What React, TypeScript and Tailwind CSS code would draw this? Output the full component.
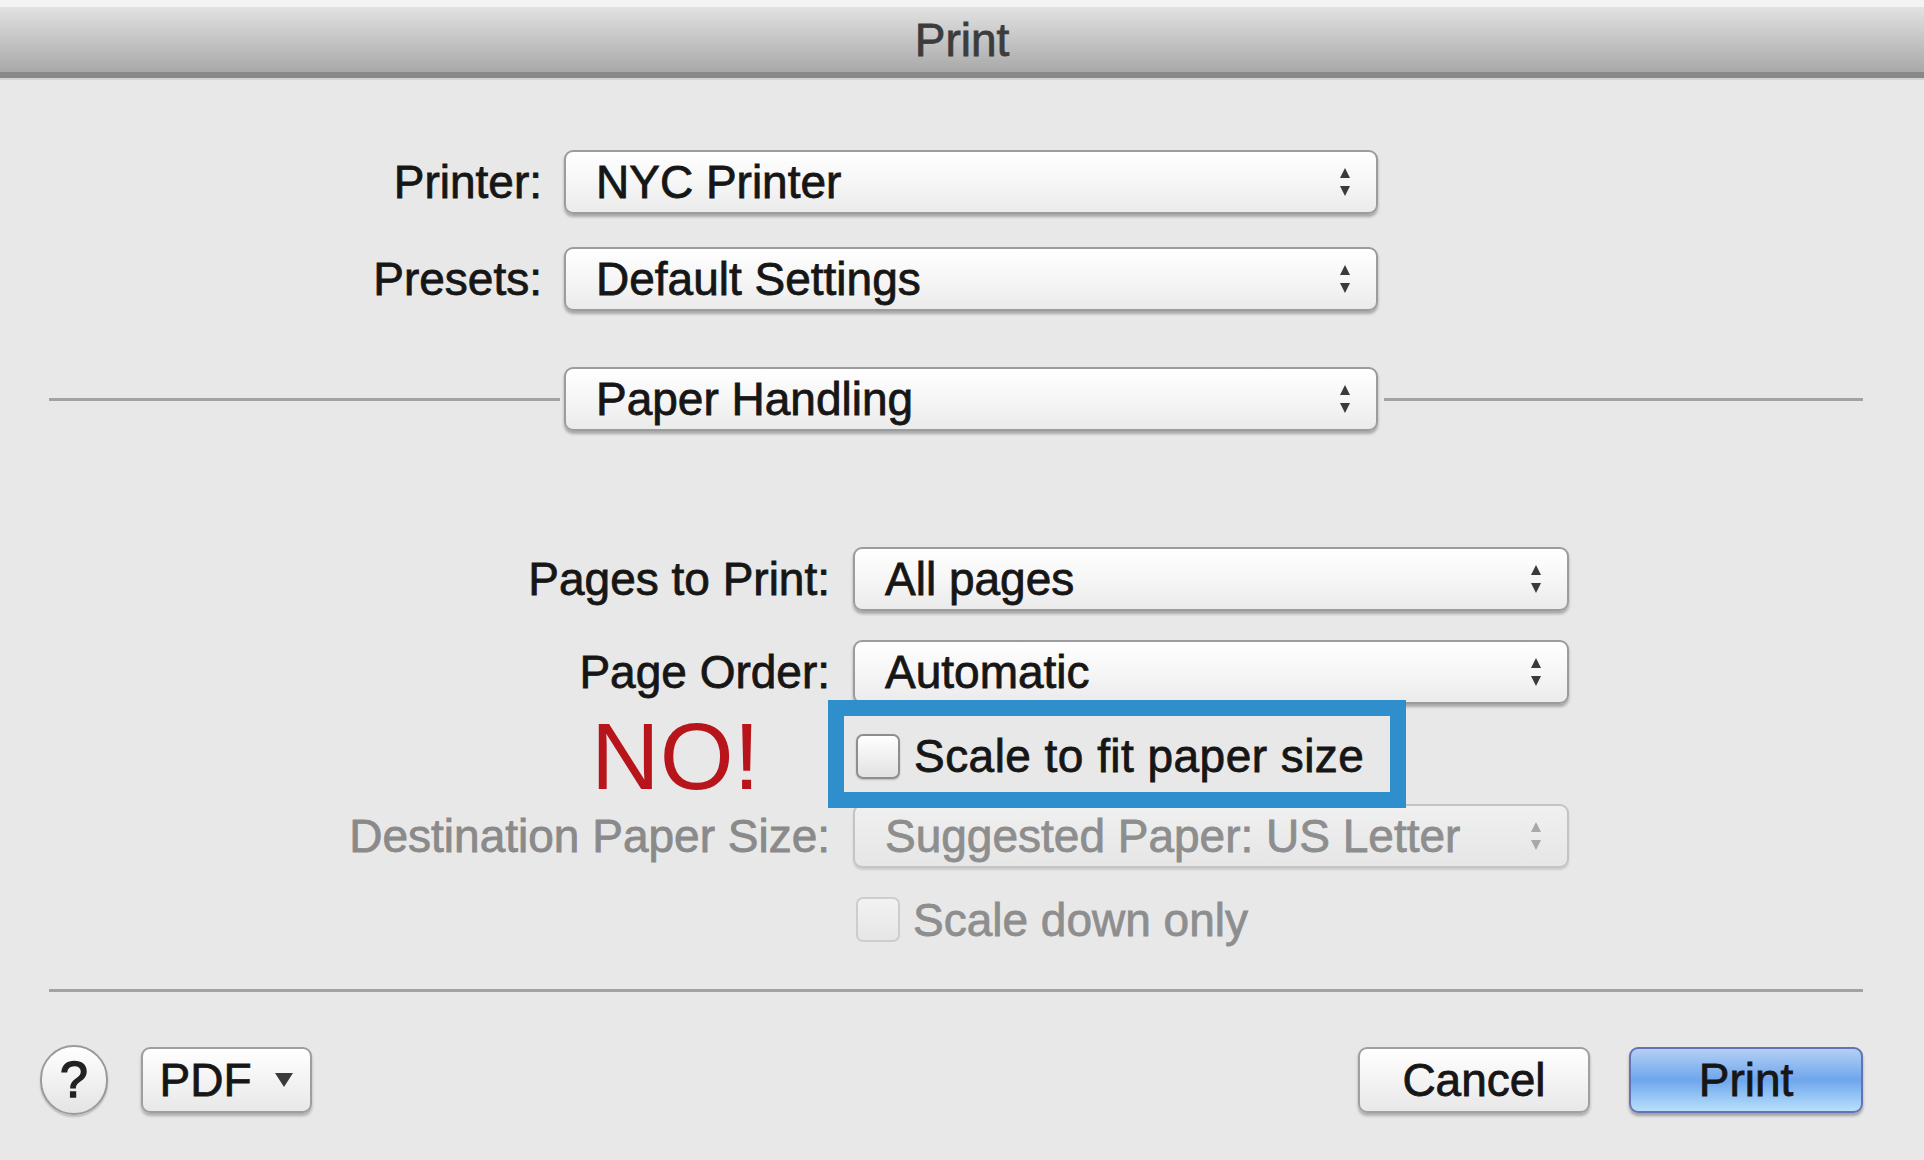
import React from "react";

const font = { fontFamily: '"Liberation Sans", Arial, sans-serif' };

const Arrows = ({ dim = false }: { dim?: boolean }) => (
    <svg width="14" height="36" viewBox="0 0 14 36" className="shrink-0">
        <path d="M7 4 L12 14 L2 14 Z" fill={dim ? "#a8a8a8" : "#3a3a3a"} />
        <path d="M7 32 L12 22 L2 22 Z" fill={dim ? "#a8a8a8" : "#3a3a3a"} />
    </svg>
);

const Popup = ({ text, width, dim = false }: { text: string; width: string; dim?: boolean }) => (
    <div
        className={`${width} h-[64px] flex items-center justify-between pl-[30px] pr-[24px] rounded-[9px] border-2 ${dim
            ? "border-[#c4c4c4] bg-gradient-to-b from-[#f0f0f0] to-[#e6e6e6] text-[#8e8e8e] shadow-[0_2px_2px_rgba(0,0,0,0.12)]"
            : "border-[#9c9c9c] bg-gradient-to-b from-[#ffffff] via-[#f6f6f6] to-[#ebebeb] text-[#161616] shadow-[0_3px_3px_rgba(0,0,0,0.28)]"
            }`}
    >
        <span className="text-[46px] leading-none">{text}</span>
        <Arrows dim={dim} />
    </div>
);

const Checkbox = ({ dim = false }: { dim?: boolean }) => (
    <div
        className={`w-[44px] h-[45px] rounded-[7px] border-2 ${dim
            ? "border-[#cdcdcd] bg-gradient-to-b from-[#f2f2f2] to-[#e6e6e6]"
            : "border-[#8e8e8e] bg-gradient-to-b from-[#ffffff] to-[#e2e2e2] shadow-[0_1px_2px_rgba(0,0,0,0.2)]"
            }`}
    />
);

const Button = ({ children, className }: { children: React.ReactNode; className: string }) => (
    <div className={`h-[66px] flex items-center justify-center rounded-[9px] border-2 text-[46px] leading-none ${className}`}>
        {children}
    </div>
);

export default function App() {
    return (
        <div style={font} className="w-full h-[1160px] overflow-hidden bg-[#e8e8e8] flex flex-col text-[#161616] [-webkit-text-stroke-width:0.8px]">
            {/* title bar */}
            <div className="h-[80px] shrink-0 flex flex-col">
                <div className="h-[7px] bg-[#f3f3f3]" />
                <div className="h-[65px] bg-gradient-to-b from-[#e2e2e2] to-[#a9a9a9] flex items-center justify-center">
                    <span className="text-[46px] leading-none text-[#3c3c3c]">Print</span>
                </div>
                <div className="h-[6px] bg-[#888888]" />
                <div className="h-[2px] bg-[#d2d2d2]" />
            </div>

            {/* printer / presets */}
            <div className="mt-[70px] flex flex-col gap-[33px]">
                <div className="flex items-center gap-[22px]">
                    <div className="w-[542px] text-right text-[46px] leading-none">Printer:</div>
                    <Popup text="NYC Printer" width="w-[814px]" />
                </div>
                <div className="flex items-center gap-[22px]">
                    <div className="w-[542px] text-right text-[46px] leading-none">Presets:</div>
                    <Popup text="Default Settings" width="w-[814px]" />
                </div>
            </div>

            {/* section selector */}
            <div className="mt-[56px] flex items-center pl-[49px] pr-[61px]">
                <div className="w-[511px] h-[3px] bg-[#a2a2a2]" />
                <div className="ml-[4px]">
                    <Popup text="Paper Handling" width="w-[814px]" />
                </div>
                <div className="ml-[6px] flex-1 h-[3px] bg-[#a2a2a2]" />
            </div>

            {/* paper handling options */}
            <div className="mt-[116px] flex flex-col">
                <div className="flex items-center gap-[23px]">
                    <div className="w-[830px] text-right text-[46px] leading-none">Pages to Print:</div>
                    <Popup text="All pages" width="w-[716px]" />
                </div>
                <div className="mt-[29px] flex items-center gap-[23px]">
                    <div className="w-[830px] text-right text-[46px] leading-none">Page Order:</div>
                    <Popup text="Automatic" width="w-[716px]" />
                </div>
                <div className="mt-[18px] h-[68px] flex items-center">
                    <div className="w-[828px] pr-[68px] text-right text-[95px] leading-none text-[#b8141c] [-webkit-text-stroke-width:0px]">NO!</div>
                    <div className="relative h-[68px] w-[578px] flex items-center pl-[28px] gap-[14px]">
                        <div className="absolute -top-[22px] -bottom-[18px] left-0 right-0 border-[16px] border-[#2f8fcd]" />
                        <Checkbox />
                        <span className="text-[46px] leading-none tracking-[0.01em]">Scale to fit paper size</span>
                    </div>
                </div>
                <div className="mt-[14px] flex items-center gap-[23px]">
                    <div className="w-[830px] text-right text-[46px] leading-none text-[#8a8a8a]">Destination Paper Size:</div>
                    <Popup text="Suggested Paper: US Letter" width="w-[716px]" dim />
                </div>
                <div className="mt-[29px] h-[45px] flex items-center gap-[13px] pl-[856px]">
                    <Checkbox dim />
                    <span className="text-[46px] leading-none text-[#8e8e8e]">Scale down only</span>
                </div>
            </div>

            {/* bottom separator */}
            <div className="mt-[47px] ml-[49px] mr-[61px] h-[3px] bg-[#a2a2a2]" />

            {/* buttons */}
            <div className="mt-[53px] flex items-center pl-[40px] pr-[61px]">
                <div className="w-[68px] h-[70px] rounded-full border-2 border-[#9a9a9a] bg-gradient-to-b from-[#ffffff] to-[#e4e4e4] shadow-[0_2px_2px_rgba(0,0,0,0.2)] flex items-center justify-center text-[50px] leading-none text-[#222] [-webkit-text-stroke-width:1.5px]">
                    ?
                </div>
                <Button className="ml-[33px] w-[171px] gap-[22px] border-[#9e9e9e] bg-gradient-to-b from-[#ffffff] to-[#e8e8e8] shadow-[0_3px_3px_rgba(0,0,0,0.25)]">
                    <span>PDF</span>
                    <svg width="20" height="16" viewBox="0 0 20 16">
                        <path d="M1 1 L19 1 L10 15 Z" fill="#3a3a3a" />
                    </svg>
                </Button>
                <div className="flex-1" />
                <Button className="w-[232px] border-[#a0a0a0] bg-gradient-to-b from-[#ffffff] to-[#e8e8e8] shadow-[0_3px_3px_rgba(0,0,0,0.25)]">
                    Cancel
                </Button>
                <Button className="ml-[39px] w-[234px] border-[#6672b4] bg-gradient-to-b from-[#b4d0f4] via-[#6ea6ec] to-[#b8e0fa] shadow-[0_3px_3px_rgba(0,0,0,0.3)]">
                    Print
                </Button>
            </div>
        </div>
    );
}
